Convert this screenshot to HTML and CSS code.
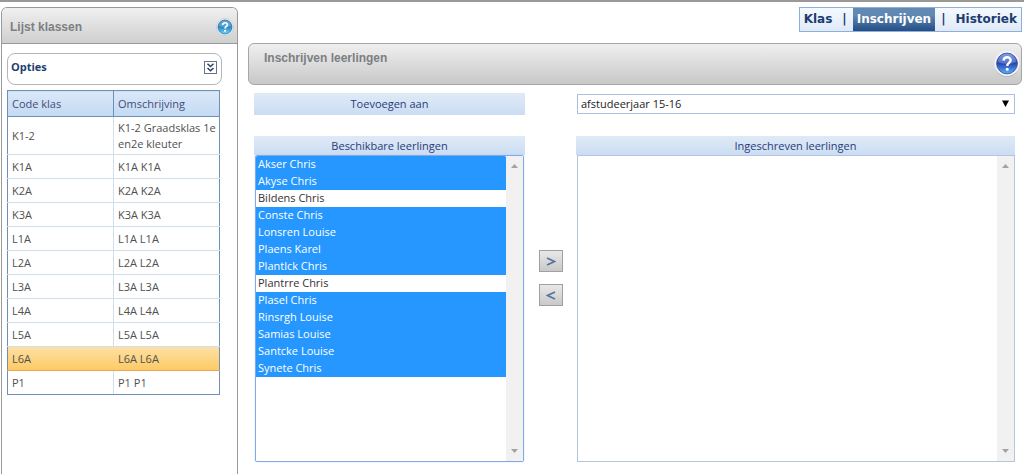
FILE: index.html
```html
<!DOCTYPE html>
<html lang="nl">
<head>
<meta charset="utf-8">
<title>Inschrijven leerlingen</title>
<link rel="stylesheet" href="styles.css">
</head>
<body>
<div class="page">
  <aside class="sidebar">
    <header class="sidebar-head">
      <h2 class="title">Lijst klassen</h2>
      <button class="icon-button" type="button" aria-label="Help bij lijst klassen">
        <svg width="18" height="18" viewBox="0 0 18 18">
          <defs><linearGradient id="teal" x1="0" y1="0" x2="0" y2="1"><stop offset="0" stop-color="#2f86bd"/><stop offset=".5" stop-color="#2a86c4"/><stop offset="1" stop-color="#6fd8f5"/></linearGradient></defs>
          <circle cx="9" cy="9" r="8.5" fill="#f4fafd" stroke="#b5c0c8" stroke-width=".6"/>
          <circle cx="9" cy="9" r="7" fill="url(#teal)" stroke="#2674a8" stroke-width=".8"/>
          <path d="M3 8a6 5.6 0 0 1 12 0Q9 10 3 8z" fill="#fff" opacity=".25"/>
          <path d="M6.7 7.1c0-3.2 4.9-3 4.7-.2-.1 1.6-2.3 1.6-2.3 3.6" fill="none" stroke="#fff" stroke-width="1.7"/>
          <circle cx="9.1" cy="12.8" r="1.1" fill="#fff"/>
        </svg>
      </button>
    </header>
    <div class="sidebar-body">
      <section class="options">
        <h3 class="options-title">Opties</h3>
        <button class="icon-button" type="button" aria-label="Opties openen">
          <svg width="13" height="13" viewBox="0 0 13 13">
            <rect x=".5" y=".5" width="12" height="12" fill="#fff" stroke="#5f7690"/>
            <path d="M3.500 2.800l3 2.700 3-2.700M3.500 7l3 2.700 3-2.700" fill="none" stroke="#2b3f58" stroke-width="1.500"/>
          </svg>
        </button>
      </section>
      <table class="classes">
        <thead><tr><th scope="col">Code klas</th><th scope="col">Omschrijving</th></tr></thead>
        <tbody>
          <tr class="tall"><td>K1-2</td><td>K1-2 Graadsklas 1e<br>en2e kleuter</td></tr>
          <tr><td>K1A</td><td>K1A K1A</td></tr>
          <tr><td>K2A</td><td>K2A K2A</td></tr>
          <tr><td>K3A</td><td>K3A K3A</td></tr>
          <tr><td>L1A</td><td>L1A L1A</td></tr>
          <tr><td>L2A</td><td>L2A L2A</td></tr>
          <tr><td>L3A</td><td>L3A L3A</td></tr>
          <tr><td>L4A</td><td>L4A L4A</td></tr>
          <tr><td>L5A</td><td>L5A L5A</td></tr>
          <tr class="current"><td>L6A</td><td>L6A L6A</td></tr>
          <tr><td>P1</td><td>P1 P1</td></tr>
        </tbody>
      </table>
    </div>
  </aside>

  <main class="main">
    <nav class="tabs">
      <a class="tab" href="#klas">Klas</a><span class="bar">|</span><a class="tab active" href="#inschrijven" aria-current="page">Inschrijven</a><span class="bar">|</span><a class="tab" href="#historiek">Historiek</a>
    </nav>
    <header class="main-head">
      <h1 class="title">Inschrijven leerlingen</h1>
      <button class="icon-button" type="button" aria-label="Help bij inschrijven">
        <svg width="26" height="28" viewBox="0 0 26 28">
          <defs><linearGradient id="blue" x1="0" y1="0" x2="0" y2="1"><stop offset="0" stop-color="#5d83d8"/><stop offset=".5" stop-color="#2848b4"/><stop offset="1" stop-color="#58b4fa"/></linearGradient></defs>
          <ellipse cx="13" cy="15" rx="12" ry="12" fill="#999" opacity=".45"/>
          <circle cx="13" cy="13.500" r="12.500" fill="#f5f5fa"/>
          <circle cx="13" cy="13.500" r="10.400" fill="url(#blue)" stroke="#3450a4" stroke-width=".9"/>
          <path d="M4 12a9 8.500 0 0 1 18 0Q13 16 4 12z" fill="#fff" opacity=".22"/>
          <path d="M9.600 10.600c.1-4.600 7.300-4.300 7 -.2-.2 2.600-3.400 2.500-3.400 5.600" fill="none" stroke="#fff" stroke-width="2.400"/>
          <circle cx="13.200" cy="19.300" r="1.500" fill="#fff"/>
        </svg>
      </button>
    </header>

    <form class="form">
      <label class="caption caption-large" for="target">Toevoegen aan</label>
      <div class="target">
        <select id="target" class="dropdown"><option>afstudeerjaar 15-16</option></select>
        <svg class="arrow" width="7" height="7" viewBox="0 0 7 7"><path d="M0 .5h7L3.500 7z" fill="#000"/></svg>
      </div>

      <div class="column">
        <label class="caption" for="available">Beschikbare leerlingen</label>
        <div class="listbox focused">
          <select id="available" class="list" multiple size="13">
            <option selected>Akser Chris</option>
            <option selected>Akyse Chris</option>
            <option>Bildens Chris</option>
            <option selected>Conste Chris</option>
            <option selected>Lonsren Louise</option>
            <option selected>Plaens Karel</option>
            <option selected>Plantlck Chris</option>
            <option>Plantrre Chris</option>
            <option selected>Plasel Chris</option>
            <option selected>Rinsrgh Louise</option>
            <option selected>Samias Louise</option>
            <option selected>Santcke Louise</option>
            <option selected>Synete Chris</option>
          </select>
          <div class="track" aria-hidden="true">
            <svg width="7" height="4" viewBox="0 0 7 4"><path d="M0 4l3.500-4L7 4z" fill="#a3a3a3"/></svg>
            <svg width="7" height="4" viewBox="0 0 7 4"><path d="M0 0h7L3.500 4z" fill="#a3a3a3"/></svg>
          </div>
        </div>
      </div>

      <div class="moves">
        <button class="move" type="button" aria-label="Inschrijven"><svg width="10" height="9" viewBox="0 0 10 9"><path d="M1 1l7.500 3.500L1 8" fill="none" stroke="#54749f" stroke-width="1.700"/></svg></button>
        <button class="move" type="button" aria-label="Uitschrijven"><svg width="10" height="9" viewBox="0 0 10 9"><path d="M9 1L1.500 4.500 9 8" fill="none" stroke="#54749f" stroke-width="1.700"/></svg></button>
      </div>

      <div class="column">
        <label class="caption" for="enrolled">Ingeschreven leerlingen</label>
        <div class="listbox">
          <select id="enrolled" class="list" multiple size="13"></select>
          <div class="track" aria-hidden="true">
            <svg width="7" height="4" viewBox="0 0 7 4"><path d="M0 4l3.500-4L7 4z" fill="#a3a3a3"/></svg>
            <svg width="7" height="4" viewBox="0 0 7 4"><path d="M0 0h7L3.500 4z" fill="#a3a3a3"/></svg>
          </div>
        </div>
      </div>
    </form>
  </main>
</div>
</body>
</html>
```

FILE: styles.css
```css
* { box-sizing: border-box; }

body {
  margin: 0;
  background: #fff;
  font: 11px/16px "Open Sans", "Noto Sans", sans-serif;
  color: #505050;
}

.page {
  display: flex;
  gap: 10px;
  min-height: 100vh;
  padding: 5px 2px 0 1px;
  border-top: 2px solid #999;
}

.title {
  margin: 0;
  font: bold 12px/16px "Liberation Sans", Arial, sans-serif;
  color: #7b7f82;
}

.icon-button {
  display: flex;
  padding: 0;
  border: 0;
  background: none;
}

/* Left panel */
.sidebar {
  flex: 0 0 237px;
  border: 1px solid #999;
  border-bottom: 0;
  border-radius: 6px 6px 0 0;
}

.sidebar-head {
  display: flex;
  align-items: center;
  justify-content: space-between;
  height: 36px;
  padding: 2px 3px 0 8px;
  border-bottom: 1px solid #999;
  border-radius: 5px 5px 0 0;
  background: linear-gradient(#f0f0f0, #cfcfcf);
}

.sidebar-body { padding: 9px 15px 0 5px; }

.options {
  display: flex;
  align-items: center;
  justify-content: space-between;
  height: 32px;
  padding: 0 4px 4px 3px;
  border: 1px solid #b5b5b5;
  border-radius: 8px;
}

.options-title {
  margin: 0;
  font-size: 11px;
  line-height: 16px;
  color: #1e3f73;
}

.classes {
  width: 213px;
  margin-top: 5px;
  border: 1px solid #6d8fb8;
  border-collapse: collapse;
  table-layout: fixed;
}

.classes th,
.classes td {
  height: 24px;
  padding: 0 0 0 4px;
  border: 1px solid #d3deec;
  text-align: left;
  white-space: nowrap;
}

.classes th {
  height: 26px;
  border-color: #6d8fb8;
  background: linear-gradient(#dbe8f8, #c3d9f3);
  font-weight: normal;
  color: #444c78;
}

.classes .tall td { height: 38px; }

.classes tr > :first-child { border-left-color: #6d8fb8; }
.classes tr > :last-child { border-right-color: #6d8fb8; }
.classes tr:last-child > * { border-bottom-color: #6d8fb8; }

.classes .current {
  background: linear-gradient(#fde0a4, #fdca62);
}

.classes .current td {
  border-bottom-color: #eba55a;
}

.classes .current td:first-child { border-right-color: transparent; }

/* Right side */
.main {
  display: flex;
  flex: 1;
  flex-direction: column;
  min-width: 0;
}

.tabs {
  display: flex;
  align-self: flex-end;
  height: 25px;
  border: 1px solid #8eb0d8;
  background: linear-gradient(#f5f9fe, #dfeaf8);
  font: bold 12px/23px "DejaVu Sans", Verdana, sans-serif;
  color: #1d3c70;
}

.tab {
  padding: 0 4px;
  color: inherit;
  text-decoration: none;
}

.active {
  background: linear-gradient(#6288b4 30%, #234e86);
  color: #fff;
}

.bar { padding: 0 6px; }

.main-head {
  display: flex;
  justify-content: space-between;
  height: 42px;
  margin-top: 11px;
  padding: 6px 1px 0 15px;
  border: 1px solid #a6a6a6;
  border-radius: 6px;
  background: linear-gradient(#efefef, #c8c8c8);
}

.form {
  display: grid;
  grid-template-columns: 271fr 51px 439fr;
  row-gap: 21px;
  padding: 8px 7px 0 6px;
}

.caption {
  display: block;
  height: 19px;
  background: linear-gradient(#dfeaf7, #cbddf3);
  line-height: 20px;
  color: #293c78;
  text-align: center;
}

.caption-large {
  height: 22px;
  line-height: 22px;
}

.target {
  position: relative;
  grid-column: 3;
  padding: 1px 0 0 1px;
}

.dropdown {
  width: 100%;
  height: 20px;
  padding: 0 3px;
  border: 1px solid #a8bfdf;
  border-radius: 0;
  appearance: none;
  background: #fff;
  font: inherit;
  color: #222;
}

.arrow {
  position: absolute;
  top: 7px;
  right: 6px;
  pointer-events: none;
}

.listbox {
  display: flex;
  height: 307px;
  margin-left: 1px;
  border: 1px solid #b3c5df;
}

.focused {
  margin-right: 1px;
  border: 1px solid #7fa8ee;
  border-radius: 2px;
  box-shadow: 0 0 1px #7fa8ee;
}

.list {
  flex: 1;
  min-width: 0;
  padding: 0;
  border: 0;
  outline: 0;
  overflow: hidden;
  background: #fff;
  font: inherit;
}

.list option {
  min-height: 17px;
  padding: 0 2px;
  line-height: 17px;
  color: #333;
}

.list option:checked {
  background: #2597ff linear-gradient(#2597ff, #2597ff);
  color: #fff !important;
}

.track {
  display: flex;
  flex: 0 0 17px;
  flex-direction: column;
  align-items: center;
  justify-content: space-between;
  padding: 8px 0;
  background: #f1f1f1;
}

.moves {
  display: flex;
  flex-direction: column;
  align-items: center;
  gap: 12px;
  padding-top: 114px;
}

.move {
  display: flex;
  align-items: center;
  justify-content: center;
  width: 24px;
  height: 22px;
  padding: 0;
  border: 1px solid #a0a0a0;
  background: linear-gradient(#e8e8e8, #c9c9c9);
}
```
